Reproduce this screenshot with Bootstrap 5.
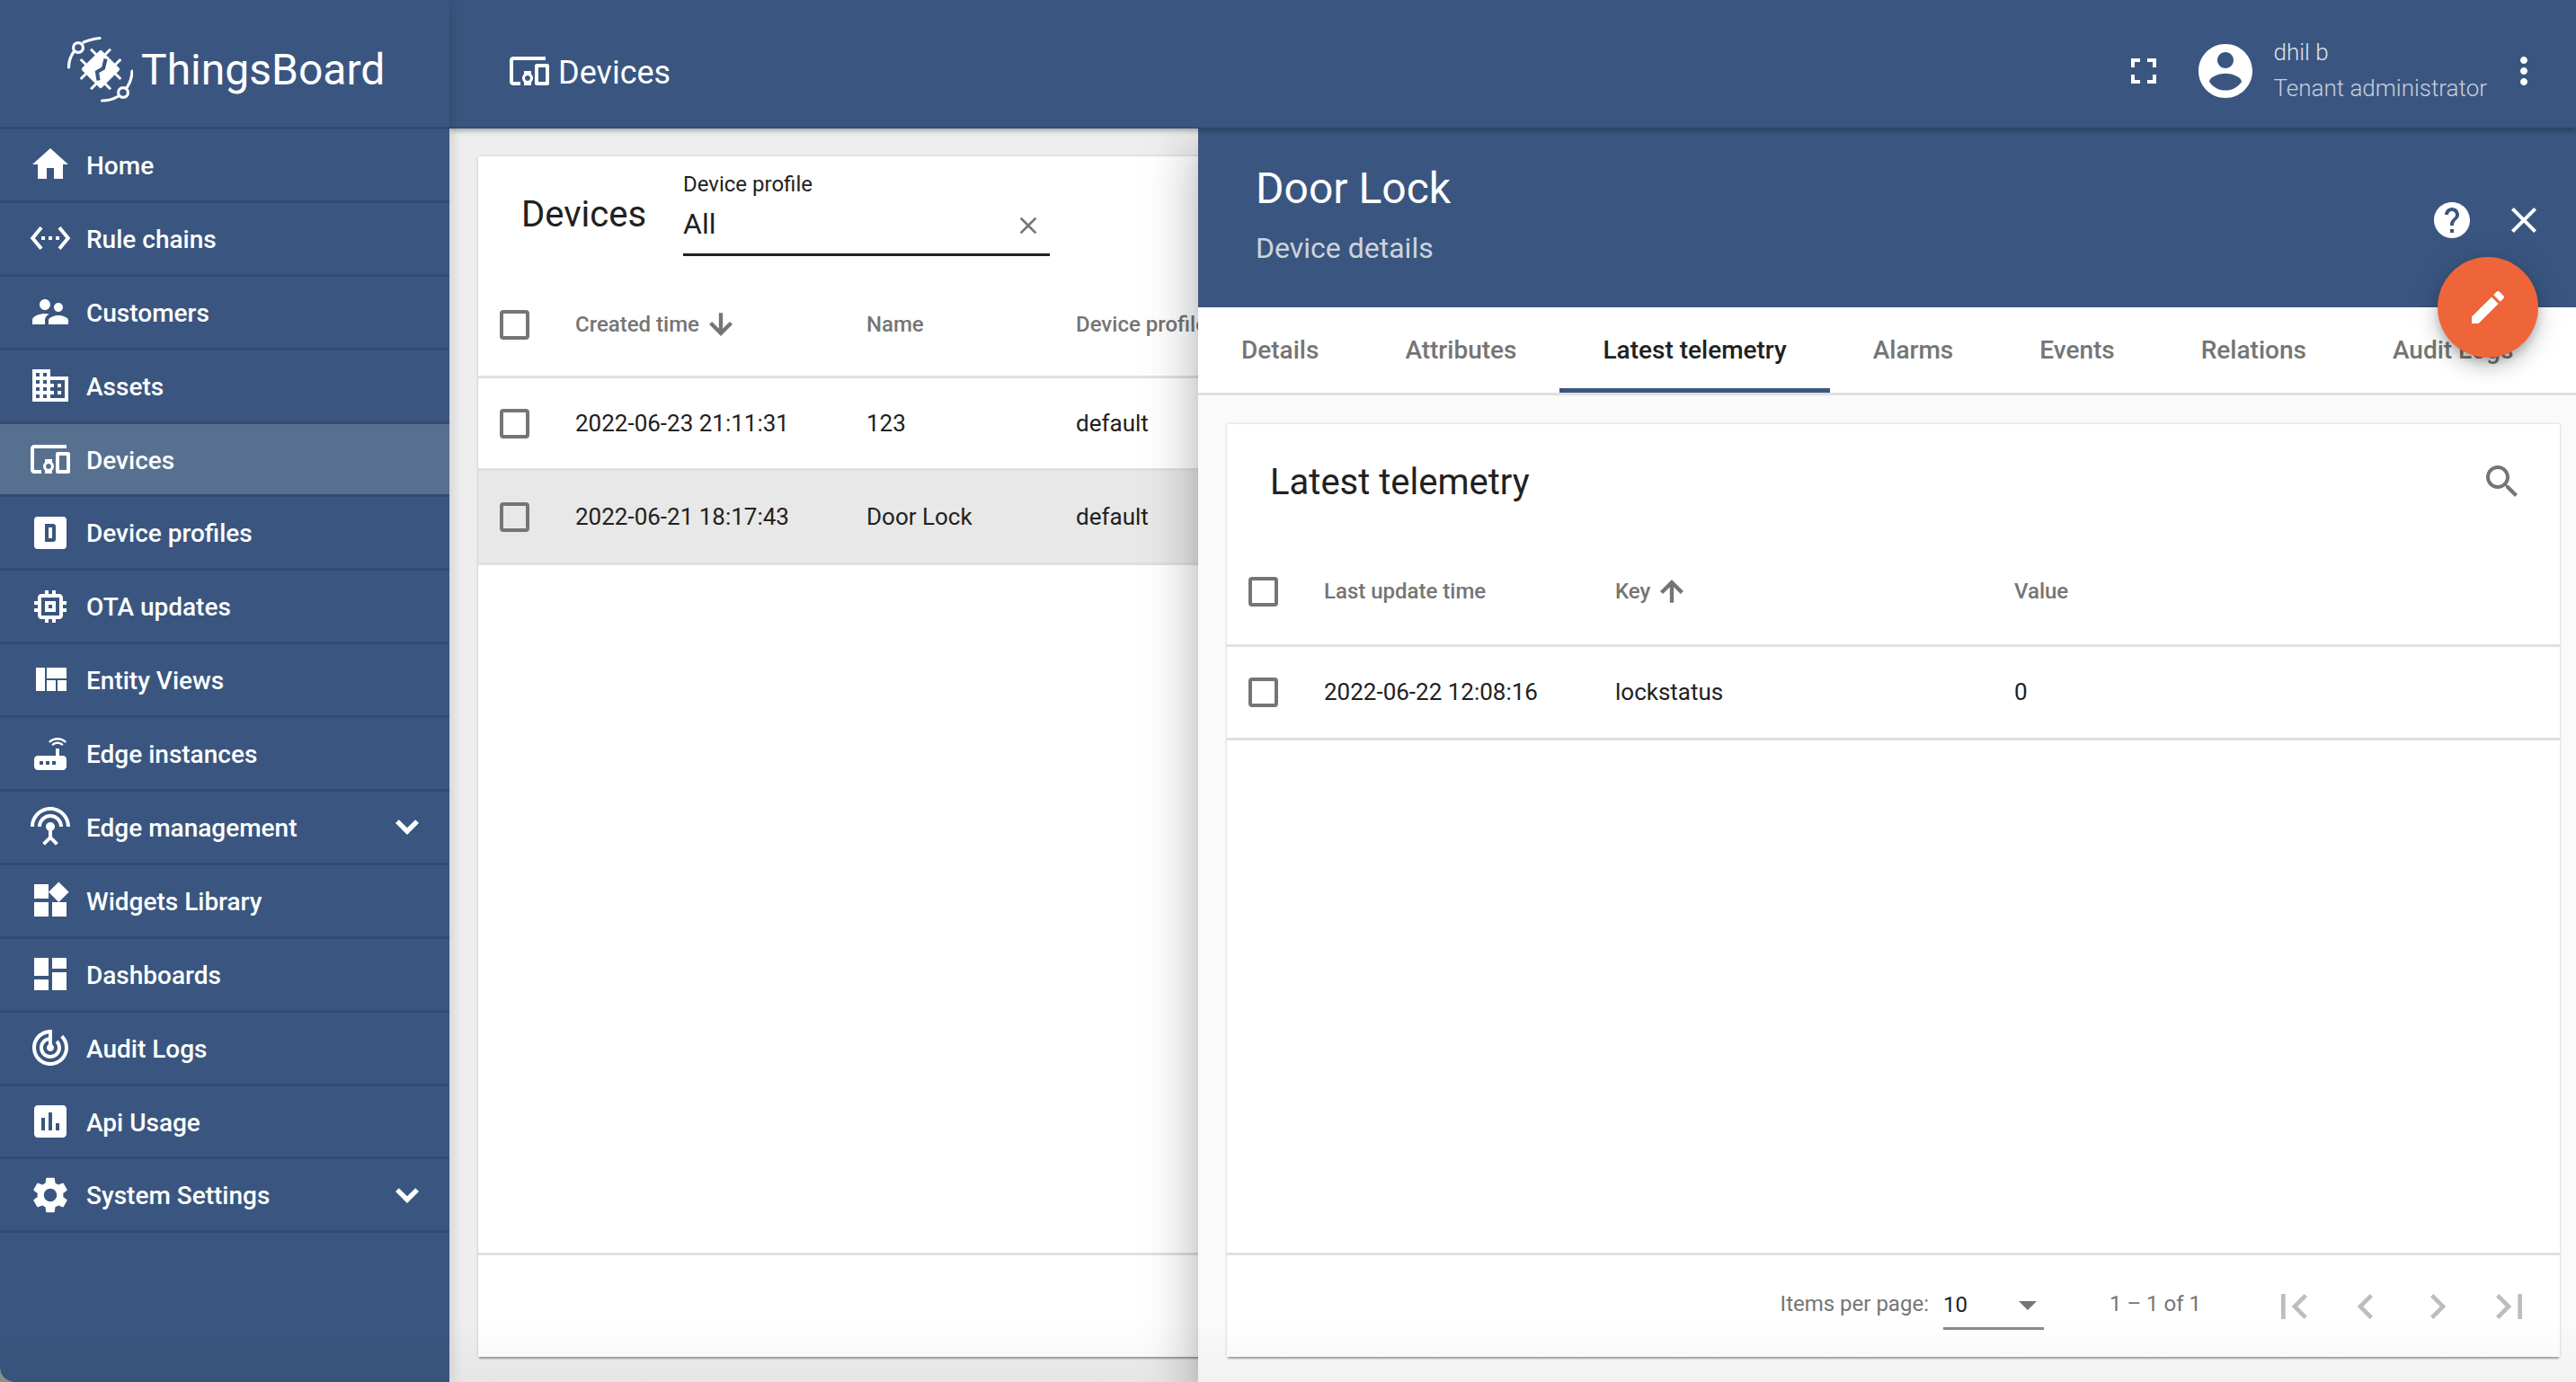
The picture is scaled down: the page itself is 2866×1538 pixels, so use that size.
<!DOCTYPE html>
<html lang="en">
<head>
<meta charset="utf-8">
<title>ThingsBoard</title>
<link rel="stylesheet" href="https://cdn.jsdelivr.net/npm/bootstrap@5.3.0/dist/css/bootstrap.min.css">
<style>
html,body{height:100%;margin:0;background:#8e8e8e;overflow:hidden}
body{font-family:Roboto,"Liberation Sans",sans-serif;color:#212121}
.tb-app{width:2866px;height:1538px;background:#eeeeee;border-bottom-left-radius:16px;overflow:hidden;position:relative}
.tb-side{width:500px;flex:none;background:#3a5680;color:#fff;position:relative;z-index:3;box-shadow:0 0 16px rgba(0,0,0,.18)}
.tb-logo{height:144px;border-bottom:3px solid #324b72;gap:9px;padding:15px 0 0 74px}
.tb-logo span{font-size:48px;line-height:1;font-weight:400}
.tb-navrow{height:81.9px;border-bottom:3px solid #324b72;padding-left:32px;color:#fff;text-decoration:none;font-size:28px;font-weight:500}
.tb-navrow.on{background:#587090}
.tb-navrow .ic{width:48px;height:48px;fill:#fff;flex:none}
.tb-navrow .lbl{margin-left:16px;flex:1;padding-top:3px}
.tb-navrow .chev{margin-right:23px}
.tb-main{flex:1;min-width:0}
.tb-top{height:143px;background:#3a5680;color:#fff;box-shadow:0 2px 6px rgba(0,0,0,.35);position:relative;z-index:2;padding:16px 34px 0 65px;border-bottom:2px solid #334d74}
.tb-top .ttl{font-size:36px;margin-left:8px;padding-top:5px}
.tb-top svg{fill:#fff;flex:none}
.tb-user{line-height:1.2;margin-left:17px;margin-right:17px;font-weight:300;padding-top:2px}
.tb-user .u1{font-size:26px;line-height:29px;color:rgba(255,255,255,.85);margin-bottom:10px}
.tb-user .u2{font-size:26px;color:rgba(255,255,255,.72)}
.tb-fs{margin-right:31px}
.tb-card{background:#fff;box-shadow:0 3px 2px -1px rgba(0,0,0,.32),0 0 3px rgba(0,0,0,.18)}
.tb-left{position:absolute;left:532px;top:174px;width:1400px;height:1336px}
.tb-lhead{height:138px;padding-left:48px}
.tb-lhead .ttl{font-size:40px;width:180px;margin-top:-8px}
.tb-field{width:408px;height:104px;margin-top:-20px;border-bottom:3px solid #212121;position:relative}
.tb-field .flab{font-size:24px;line-height:32px;margin-top:8px}
.tb-field .fval{font-size:32px;line-height:44px;margin-top:6px}
.tb-field svg{position:absolute;right:8px;top:54px;fill:#757575}
.tb-trow{border-bottom:3px solid #e0e0e0;padding-left:24px;font-size:26px}
.tb-trow.hd{font-size:24px;font-weight:500;color:#757575}
.tb-trow.sel{background:#e8e8e8}
.tb-left .hd{height:109px;padding-bottom:8px}
.tb-left .rw1{height:103px}
.tb-left .rw2{height:105px}
.tb-chk{width:33px;height:33px;border:4px solid #757575;border-radius:4px;flex:none}
.tb-arrow{fill:#757575;stroke:#757575;stroke-width:.9;margin-left:6px}
.tb-left .c2{width:375px;flex:none;padding-left:51px;display:flex;align-items:center}
.tb-left .c3{width:233px;flex:none}
.tb-lfoot{border-top:3px solid #e0e0e0;height:116px;position:absolute;left:0;right:0;bottom:0}
.tb-panel{position:absolute;left:1333px;right:0;top:143px;bottom:0;background:#fafafa;z-index:1;box-shadow:0 16px 20px -10px rgba(0,0,0,.2),0 32px 48px 4px rgba(0,0,0,.14),0 12px 60px 10px rgba(0,0,0,.12)}
.tb-phead{height:199px;background:#3a5680;color:#fff;padding:38px 0 0 64px;position:relative}
.tb-phead .t1{font-size:48px;line-height:58px}
.tb-phead .t2{font-size:32px;line-height:40px;color:rgba(255,255,255,.75);margin-top:17px}
.tb-pact{position:absolute;top:78px;fill:#fff}
.tb-pact.a1{left:1371px}
.tb-pact.a2{left:1451px}
.tb-fab{position:absolute;left:2712px;top:286px;width:112px;height:112px;border-radius:50%;background:#ee6539;border:0;box-shadow:0 6px 10px -2px rgba(0,0,0,.2),0 12px 20px rgba(0,0,0,.14),0 2px 36px rgba(0,0,0,.12);z-index:4;padding:0}
.tb-fab svg{fill:#fff}
.tb-tabs{height:98px;background:#fff;border-bottom:3px solid #e0e0e0;overflow:hidden;flex-wrap:nowrap}
.tb-tab{padding:0 48px;font-size:28px;font-weight:500;color:#757575;height:95px;line-height:95px;white-space:nowrap}
.tb-tab.on{color:#212121;border-bottom:5px solid #3a5680}
.tb-inner{position:absolute;left:32px;right:18px;top:329px;height:1038px}
.tb-ihead{height:128px;padding:0 40px 0 48px;font-size:40px}
.tb-ihead span{padding-top:1px}
.tb-ihead svg{fill:#757575}
.tb-inner .hd{height:120px;padding-bottom:1px}
.tb-inner .rw1{height:104px}
.tb-inner .c2{width:375px;padding-left:51px;flex:none}
.tb-inner .c3{width:444px;flex:none}
.tb-ifoot{position:absolute;left:0;right:0;bottom:0;height:116px;border-top:3px solid #e0e0e0;color:#757575;font-size:24px;padding-right:28px}
.tb-ifoot .pt{margin-bottom:6px}
.tb-sel{width:112px;border-bottom:3px solid #8a8a8a;height:46px;color:#212121;padding-top:0;margin:6px 73px 0 16px;position:relative}
.tb-sel i{position:absolute;right:8px;top:14px;width:0;height:0;border-left:10px solid transparent;border-right:10px solid transparent;border-top:10px solid #757575}
.tb-range{margin-right:75px}
.tb-pgr{fill:#bdbdbd;flex:none}
.tb-corner{position:absolute;left:0;right:0;bottom:0;height:70px;background:linear-gradient(rgba(0,0,0,0),rgba(0,0,0,.035));z-index:5;pointer-events:none}
</style>
</head>
<body>
<div class="tb-app d-flex">
  <aside class="tb-side">
    <div class="tb-logo d-flex align-items-center">
      <svg width="74" height="76" viewBox="74 40 74 76" fill="none" stroke="#fff" stroke-width="3.2" stroke-linecap="round" aria-label="logo">
        <path d="M76.500 75c0-7 3-14 6-18M93 47c5-2 11-4 18-4.500"/><circle cx="87" cy="53" r="5.400"/>
        <path d="M147 79c0 8-3 14-5.500 18M131 107.500c-5 3-11 4.500-17.500 4.500"/><circle cx="137" cy="103" r="5.400"/>
        <g transform="rotate(45 112 77)">
          <rect x="96.500" y="61.500" width="31" height="31" rx="2" fill="#fff" stroke="none"/>
          <path d="M104 53.500v47M120 53.500v47M88.500 69h47M88.500 85h47" stroke-width="3" stroke-linecap="butt"/>
        </g>
        <path d="M117.500 65.500L115 76l-7 4 1.500 9.500" stroke="#3a5680" stroke-width="4.200" stroke-linecap="butt"/>
      </svg>
      <span>ThingsBoard</span>
    </div>
    <nav class="d-flex flex-column">
      <a class="tb-navrow d-flex align-items-center" href="#"><svg class="ic" viewBox="0 0 24 24"><path d="M10 20v-6h4v6h5v-8h3L12 3 2 12h3v8z"/></svg><span class="lbl">Home</span></a>
      <a class="tb-navrow d-flex align-items-center" href="#"><svg class="ic" viewBox="0 0 24 24"><path d="M7.770 6.760L6.230 5.480.82 12l5.410 6.520 1.540-1.280L3.420 12l4.350-5.240zM7 13h2v-2H7v2zm10-2h-2v2h2v-2zm-6 2h2v-2h-2v2zm6.770-7.520l-1.540 1.280L20.580 12l-4.350 5.240 1.540 1.280L23.180 12l-5.410-6.520z"/></svg><span class="lbl">Rule chains</span></a>
      <a class="tb-navrow d-flex align-items-center" href="#"><svg class="ic" viewBox="0 0 24 24"><path d="M16.500 12c1.380 0 2.490-1.120 2.490-2.500S17.880 7 16.500 7C15.120 7 14 8.120 14 9.500s1.120 2.500 2.500 2.500zM9 11c1.660 0 2.990-1.340 2.990-3S10.660 5 9 5C7.340 5 6 6.340 6 8s1.340 3 3 3zm7.500 3c-1.830 0-5.500.92-5.500 2.750V19h11v-2.250c0-1.830-3.670-2.750-5.500-2.750zM9 13c-2.330 0-7 1.170-7 3.500V19h7v-2.250c0-.85.33-2.340 2.370-3.470C10.500 13.100 9.660 13 9 13z"/></svg><span class="lbl">Customers</span></a>
      <a class="tb-navrow d-flex align-items-center" href="#"><svg class="ic" viewBox="0 0 24 24"><path d="M12 7V3H2v18h20V7H12zM6 19H4v-2h2v2zm0-4H4v-2h2v2zm0-4H4V9h2v2zm0-4H4V5h2v2zm4 12H8v-2h2v2zm0-4H8v-2h2v2zm0-4H8V9h2v2zm0-4H8V5h2v2zm10 12h-8v-2h2v-2h-2v-2h2v-2h-2V9h8v10zm-2-8h-2v2h2v-2zm0 4h-2v2h2v-2z"/></svg><span class="lbl">Assets</span></a>
      <a class="tb-navrow on d-flex align-items-center" href="#"><svg class="ic" viewBox="0 0 24 24"><path d="M3 6h18V4H3c-1.100 0-2 .9-2 2v12c0 1.100.9 2 2 2h4v-2H3V6zm10 6H9v1.780c-.61.55-1 1.330-1 2.220s.39 1.670 1 2.220V20h4v-1.780c.61-.55 1-1.340 1-2.220s-.39-1.670-1-2.220V12zm-2 5.500c-.83 0-1.500-.67-1.500-1.500s.67-1.500 1.500-1.500 1.500.67 1.500 1.500-.67 1.500-1.500 1.500zM22 8h-6c-.5 0-1 .5-1 1v10c0 .5.5 1 1 1h6c.5 0 1-.5 1-1V9c0-.5-.5-1-1-1zm-1 10h-4v-8h4v8z"/></svg><span class="lbl">Devices</span></a>
      <a class="tb-navrow d-flex align-items-center" href="#"><svg class="ic" viewBox="0 0 24 24"><path fill-rule="evenodd" d="M5 3h14a2 2 0 0 1 2 2v14a2 2 0 0 1-2 2H5a2 2 0 0 1-2-2V5a2 2 0 0 1 2-2zm4 4v10h4.500a1.500 1.500 0 0 0 1.500-1.500v-7A1.500 1.500 0 0 0 13.500 7H9zm2 2h2v6h-2V9z"/></svg><span class="lbl">Device profiles</span></a>
      <a class="tb-navrow d-flex align-items-center" href="#"><svg class="ic" viewBox="0 0 24 24"><path d="M15 9H9v6h6V9zm-2 4h-2v-2h2v2zm8-2V9h-2V7c0-1.100-.9-2-2-2h-2V3h-2v2h-2V3H9v2H7c-1.100 0-2 .9-2 2v2H3v2h2v2H3v2h2v2c0 1.100.9 2 2 2h2v2h2v-2h2v2h2v-2h2c1.100 0 2-.9 2-2v-2h2v-2h-2v-2h2zm-4 6H7V7h10v10z"/></svg><span class="lbl">OTA updates</span></a>
      <a class="tb-navrow d-flex align-items-center" href="#"><svg class="ic" viewBox="0 0 24 24"><path d="M10 18h5v-6h-5v6zm-6 0h5V5H4v13zm12 0h5v-6h-5v6zM10 5v6h11V5H10z"/></svg><span class="lbl">Entity Views</span></a>
      <a class="tb-navrow d-flex align-items-center" href="#"><svg class="ic" viewBox="0 0 24 24"><path d="M20.200 5.900l.8-.8C19.600 3.700 17.800 3 16 3s-3.600.7-5 2.100l.8.8C13 4.800 14.500 4.200 16 4.200s3 .6 4.200 1.700zm-.9.8c-.9-.9-2.100-1.400-3.300-1.400s-2.400.5-3.300 1.400l.8.8c.7-.7 1.600-1 2.500-1 .9 0 1.800.3 2.500 1l.8-.8zM19 13h-2V9h-2v4H5c-1.100 0-2 .9-2 2v4c0 1.100.9 2 2 2h14c1.100 0 2-.9 2-2v-4c0-1.100-.9-2-2-2zM8 18H6v-2h2v2zm3.500 0h-2v-2h2v2zm3.500 0h-2v-2h2v2z"/></svg><span class="lbl">Edge instances</span></a>
      <a class="tb-navrow d-flex align-items-center" href="#"><svg class="ic" viewBox="0 0 24 24"><path d="M12 5c-3.870 0-7 3.130-7 7h2c0-2.760 2.240-5 5-5s5 2.240 5 5h2c0-3.870-3.130-7-7-7zm1 9.290c.88-.39 1.500-1.260 1.500-2.290 0-1.380-1.120-2.500-2.500-2.500S9.500 10.620 9.500 12c0 1.020.62 1.900 1.500 2.290v3.300L7.590 21 9 22.410l3-3 3 3L16.410 21 13 17.590v-3.300zM12 1C5.930 1 1 5.930 1 12h2c0-4.970 4.030-9 9-9s9 4.030 9 9h2c0-6.070-4.930-11-11-11z"/></svg><span class="lbl">Edge management</span><svg class="ic chev" viewBox="0 0 24 24"><path d="M16.590 8.590L12 13.170 7.410 8.590 6 10l6 6 6-6z" stroke="#fff" stroke-width=".7"/></svg></a>
      <a class="tb-navrow d-flex align-items-center" href="#"><svg class="ic" viewBox="0 0 24 24"><path d="M13 13v8h8v-8h-8zM3 21h8v-8H3v8zM3 3v8h8V3H3zm13.660-1.310L11 7.340 16.660 13l5.660-5.660-5.660-5.650z"/></svg><span class="lbl">Widgets Library</span></a>
      <a class="tb-navrow d-flex align-items-center" href="#"><svg class="ic" viewBox="0 0 24 24"><path d="M3 13h8V3H3v10zm0 8h8v-6H3v6zm10 0h8V11h-8v10zm0-18v6h8V3h-8z"/></svg><span class="lbl">Dashboards</span></a>
      <a class="tb-navrow d-flex align-items-center" href="#"><svg class="ic" viewBox="0 0 24 24"><path d="M19.070 4.930l-1.410 1.410C19.100 7.790 20 9.790 20 12c0 4.420-3.580 8-8 8s-8-3.580-8-8c0-4.080 3.050-7.440 7-7.930v2.020C8.160 6.570 6 9.030 6 12c0 3.310 2.690 6 6 6s6-2.690 6-6c0-1.660-.67-3.160-1.760-4.240l-1.410 1.410C15.550 9.900 16 10.900 16 12c0 2.210-1.790 4-4 4s-4-1.790-4-4c0-1.860 1.280-3.410 3-3.860v2.140c-.6.350-1 .98-1 1.720 0 1.100.9 2 2 2s2-.9 2-2c0-.74-.4-1.380-1-1.720V2h-1C6.480 2 2 6.480 2 12s4.480 10 10 10 10-4.480 10-10c0-2.760-1.120-5.260-2.930-7.070z"/></svg><span class="lbl">Audit Logs</span></a>
      <a class="tb-navrow d-flex align-items-center" href="#"><svg class="ic" viewBox="0 0 24 24"><path d="M19 3H5c-1.100 0-2 .9-2 2v14c0 1.100.9 2 2 2h14c1.100 0 2-.9 2-2V5c0-1.100-.9-2-2-2zM9 17H7v-7h2v7zm4 0h-2V7h2v10zm4 0h-2v-4h2v4z"/></svg><span class="lbl">Api Usage</span></a>
      <a class="tb-navrow d-flex align-items-center" href="#"><svg class="ic" viewBox="0 0 24 24"><path d="M19.140 12.940c.04-.3.06-.61.06-.94 0-.32-.02-.64-.07-.94l2.030-1.580a.49.49 0 0 0 .12-.61l-1.920-3.320a.488.488 0 0 0-.59-.22l-2.390.96c-.5-.38-1.030-.7-1.620-.94l-.36-2.540a.484.484 0 0 0-.48-.41h-3.840c-.24 0-.43.17-.47.41l-.36 2.540c-.59.24-1.130.57-1.620.94l-2.390-.96c-.22-.08-.47 0-.59.22L2.740 8.870c-.12.21-.08.47.12.61l2.030 1.580c-.05.3-.09.63-.09.94s.02.64.07.94l-2.030 1.580a.49.49 0 0 0-.12.61l1.920 3.320c.12.22.37.29.59.22l2.390-.96c.5.38 1.030.7 1.620.94l.36 2.540c.05.24.24.41.48.41h3.840c.24 0 .44-.17.47-.41l.36-2.540c.59-.24 1.130-.56 1.620-.94l2.390.96c.22.08.47 0 .59-.22l1.920-3.320c.12-.22.07-.47-.12-.61l-2.010-1.580zM12 15.600c-1.980 0-3.600-1.620-3.600-3.600s1.620-3.600 3.600-3.600 3.600 1.620 3.600 3.600-1.620 3.600-3.600 3.600z"/></svg><span class="lbl">System Settings</span><svg class="ic chev" viewBox="0 0 24 24"><path d="M16.590 8.590L12 13.170 7.410 8.590 6 10l6 6 6-6z" stroke="#fff" stroke-width=".7"/></svg></a>
    </nav>
  </aside>
  <main class="tb-main">
    <header class="tb-top d-flex align-items-center">
      <svg width="48" height="48" viewBox="0 0 24 24"><path d="M3 6h18V4H3c-1.100 0-2 .9-2 2v12c0 1.100.9 2 2 2h4v-2H3V6zm10 6H9v1.780c-.61.55-1 1.330-1 2.220s.39 1.670 1 2.220V20h4v-1.780c.61-.55 1-1.340 1-2.220s-.39-1.670-1-2.220V12zm-2 5.500c-.83 0-1.500-.67-1.500-1.500s.67-1.500 1.500-1.500 1.500.67 1.500 1.500-.67 1.500-1.500 1.500zM22 8h-6c-.5 0-1 .5-1 1v10c0 .5.5 1 1 1h6c.5 0 1-.5 1-1V9c0-.5-.5-1-1-1zm-1 10h-4v-8h4v8z"/></svg>
      <span class="ttl flex-grow-1">Devices</span>
      <svg class="tb-fs" width="48" height="48" viewBox="0 0 24 24"><path d="M7 14H5v5h5v-2H7v-3zm-2-4h2V7h3V5H5v5zm12 7h-3v2h5v-5h-2v3zM14 5v2h3v3h2V5h-5z"/></svg>
      <svg width="72" height="72" viewBox="0 0 24 24"><path d="M12 2C6.480 2 2 6.480 2 12s4.480 10 10 10 10-4.480 10-10S17.520 2 12 2zm0 3c1.660 0 3 1.340 3 3s-1.340 3-3 3-3-1.340-3-3 1.340-3 3-3zm0 14.200c-2.500 0-4.710-1.280-6-3.220.03-1.990 4-3.080 6-3.080 1.990 0 5.970 1.090 6 3.080-1.290 1.940-3.500 3.220-6 3.220z"/></svg>
      <div class="tb-user"><div class="u1">dhil b</div><div class="u2">Tenant administrator</div></div>
      <svg width="48" height="48" viewBox="0 0 24 24"><path d="M12 8c1.100 0 2-.9 2-2s-.9-2-2-2-2 .9-2 2 .9 2 2 2zm0 2c-1.100 0-2 .9-2 2s.9 2 2 2 2-.9 2-2-.9-2-2-2zm0 6c-1.100 0-2 .9-2 2s.9 2 2 2 2-.9 2-2-.9-2-2-2z"/></svg>
    </header>
  </main>

  <section class="tb-left tb-card">
    <div class="tb-lhead d-flex align-items-center">
      <div class="ttl">Devices</div>
      <div class="tb-field">
        <div class="flab">Device profile</div>
        <div class="fval">All</div>
        <svg width="32" height="32" viewBox="0 0 24 24"><path d="M19 6.410L17.590 5 12 10.590 6.410 5 5 6.410 10.590 12 5 17.590 6.410 19 12 13.410 17.590 19 19 17.590 13.410 12z"/></svg>
      </div>
    </div>
    <div class="tb-trow hd d-flex align-items-center">
      <span class="tb-chk"></span><span class="c2">Created time<svg class="tb-arrow" width="36" height="36" viewBox="0 0 24 24"><path d="M20 12l-1.410-1.410L13 16.170V4h-2v12.170l-5.580-5.590L4 12l8 8 8-8z"/></svg></span><span class="c3">Name</span><span>Device profile</span>
    </div>
    <div class="tb-trow rw1 d-flex align-items-center">
      <span class="tb-chk"></span><span class="c2">2022-06-23 21:11:31</span><span class="c3">123</span><span>default</span>
    </div>
    <div class="tb-trow rw2 sel d-flex align-items-center">
      <span class="tb-chk"></span><span class="c2">2022-06-21 18:17:43</span><span class="c3">Door Lock</span><span>default</span>
    </div>
    <div class="tb-lfoot"></div>
  </section>

  <section class="tb-panel">
    <div class="tb-phead">
      <div class="t1">Door Lock</div>
      <div class="t2">Device details</div>
      <svg class="tb-pact a1" width="48" height="48" viewBox="0 0 24 24"><path d="M12 2C6.480 2 2 6.480 2 12s4.480 10 10 10 10-4.480 10-10S17.520 2 12 2zm1 17h-2v-2h2v2zm2.070-7.750l-.9.92C13.450 12.900 13 13.500 13 15h-2v-.5c0-1.100.45-2.100 1.170-2.830l1.240-1.260c.37-.36.59-.86.59-1.410 0-1.100-.9-2-2-2s-2 .9-2 2H8c0-2.210 1.790-4 4-4s4 1.790 4 4c0 .88-.36 1.680-.93 2.250z"/></svg>
      <svg class="tb-pact a2" width="48" height="48" viewBox="0 0 24 24"><path d="M19 6.410L17.590 5 12 10.590 6.410 5 5 6.410 10.590 12 5 17.590 6.410 19 12 13.410 17.590 19 19 17.590 13.410 12z"/></svg>
    </div>
    <div class="tb-tabs d-flex">
      <div class="tb-tab">Details</div><div class="tb-tab">Attributes</div><div class="tb-tab on">Latest telemetry</div><div class="tb-tab">Alarms</div><div class="tb-tab">Events</div><div class="tb-tab">Relations</div><div class="tb-tab">Audit Logs</div>
    </div>
    <div class="tb-inner tb-card">
      <div class="tb-ihead d-flex align-items-center justify-content-between"><span>Latest telemetry</span><svg width="48" height="48" viewBox="0 0 24 24"><path d="M15.500 14h-.79l-.28-.27C15.410 12.590 16 11.110 16 9.500 16 5.910 13.090 3 9.500 3S3 5.910 3 9.500 5.910 16 9.500 16c1.610 0 3.090-.59 4.230-1.570l.27.28v.79l5 4.990L20.490 19l-4.990-5zm-6 0C7.010 14 5 11.990 5 9.500S7.010 5 9.500 5 14 7.010 14 9.500 11.990 14 9.500 14z"/></svg></div>
      <div class="tb-trow hd d-flex align-items-center">
        <span class="tb-chk"></span><span class="c2">Last update time</span><span class="c3 d-flex align-items-center">Key<svg class="tb-arrow" width="36" height="36" viewBox="0 0 24 24"><path d="M4 12l1.410 1.410L11 7.830V20h2V7.830l5.580 5.590L20 12l-8-8-8 8z"/></svg></span><span>Value</span>
      </div>
      <div class="tb-trow rw1 d-flex align-items-center">
        <span class="tb-chk"></span><span class="c2">2022-06-22 12:08:16</span><span class="c3">lockstatus</span><span>0</span>
      </div>
      <div class="tb-ifoot d-flex align-items-center justify-content-end">
        <span class="pt">Items per page:</span>
        <span class="tb-sel">10<i></i></span>
        <span class="tb-range pt">1 – 1 of 1</span>
        <svg class="tb-pgr" width="56" height="56" viewBox="0 0 24 24"><path d="M18.410 16.590L13.820 12l4.590-4.590L17 6l-6 6 6 6zM6 6h2v12H6z"/></svg>
        <svg class="tb-pgr ms-4" width="56" height="56" viewBox="0 0 24 24"><path d="M15.410 7.410L14 6l-6 6 6 6 1.410-1.410L10.830 12z"/></svg>
        <svg class="tb-pgr ms-4" width="56" height="56" viewBox="0 0 24 24"><path d="M10 6L8.590 7.410 13.170 12l-4.580 4.590L10 18l6-6z"/></svg>
        <svg class="tb-pgr ms-4" width="56" height="56" viewBox="0 0 24 24"><path d="M5.590 7.410L10.180 12l-4.590 4.590L7 18l6-6-6-6zM16 6h2v12h-2z"/></svg>
      </div>
    </div>
  </section>
  <button class="tb-fab d-flex align-items-center justify-content-center" type="button" aria-label="edit"><svg width="48" height="48" viewBox="0 0 24 24"><path d="M3 17.250V21h3.750L17.810 9.940l-3.750-3.750L3 17.250zM20.710 7.040c.39-.39.39-1.020 0-1.410l-2.340-2.340c-.39-.39-1.020-.39-1.410 0l-1.830 1.830 3.750 3.750 1.830-1.830z"/></svg></button>
  <div class="tb-corner"></div>
</div>
<script src="https://cdn.jsdelivr.net/npm/bootstrap@5.3.0/dist/js/bootstrap.bundle.min.js"></script>
</body>
</html>
